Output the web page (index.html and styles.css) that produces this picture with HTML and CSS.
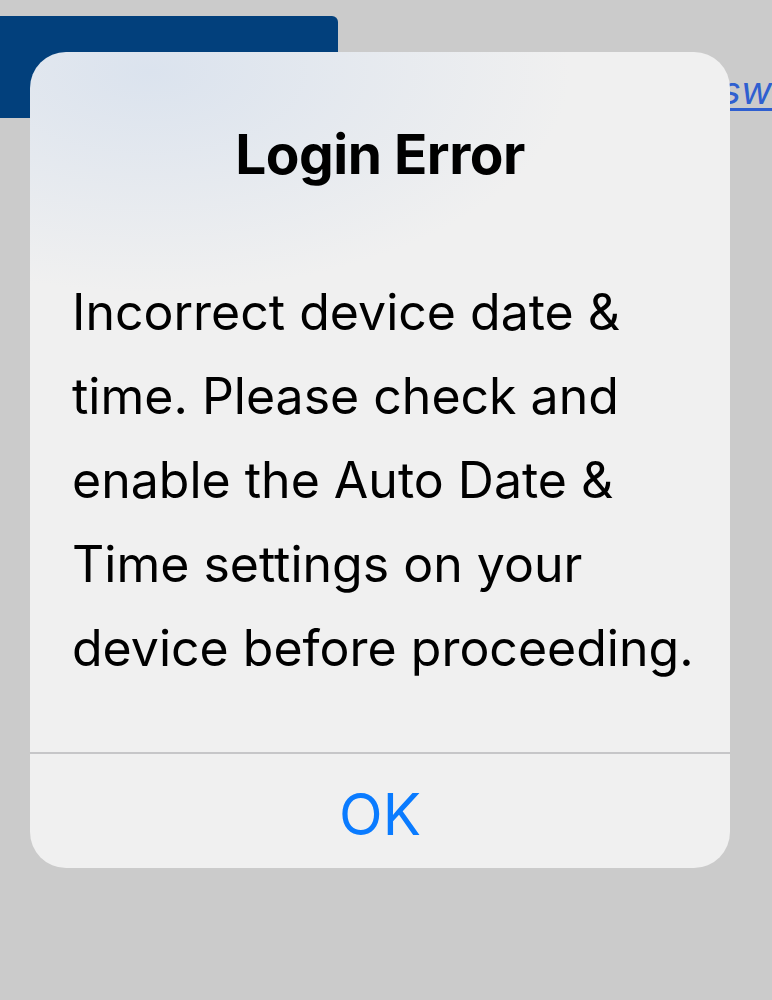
FILE: index.html
```html
<!DOCTYPE html>
<html lang="en">
<head>
  <meta charset="UTF-8">
  <title>Login</title>
  <meta name="viewport" content="width=device-width, initial-scale=1.0">
  <link rel="stylesheet" href="styles.css">
</head>
<body>
  <div class="page">
    <div class="toolbar">
      <button class="login-btn"></button>
      <a class="forgot-link" href="#">sw</a>
    </div>
  </div>

  <div class="backdrop">
    <div class="alert">
      <div class="alert-body">
        <h2 class="alert-title">Login Error</h2>
        <p class="alert-message">Incorrect device date &amp;<br>time. Please check and<br>enable the Auto Date &amp;<br>Time settings on your<br>device before proceeding.</p>
      </div>
      <button class="alert-action">OK</button>
    </div>
  </div>
</body>
</html>
```

FILE: styles.css
```css
:root {
  --page-bg: #cbcbcb;
  --alert-bg: #f0f0f0;
  --alert-line: #c6c6c8;
  --ios-blue: #0a7bff;
  --brand-blue: #02407c;
}

* {
  box-sizing: border-box;
}

body {
  margin: 0;
  min-height: 100vh;
  background-color: var(--page-bg);
  font-family: 'Inter', 'Roboto', sans-serif;
  overflow: hidden;
}

.page {
  padding-top: 16px;
}

.toolbar {
  display: flex;
  align-items: flex-start;
  justify-content: space-between;
}

.login-btn {
  width: 338px;
  height: 102px;
  border: 0;
  border-radius: 0 6px 6px 0;
  background-color: var(--brand-blue);
}

.forgot-link {
  margin-top: 54px;
  color: #2f5fd0;
  font-size: 38px;
  font-style: italic;
  line-height: 40px;
  text-decoration-thickness: 3px;
  text-underline-offset: 4px;
  white-space: nowrap;
}

.backdrop {
  position: absolute;
  inset: 0;
}

.alert {
  position: absolute;
  left: 30px;
  top: 52px;
  width: 700px;
  border-radius: 36px;
  overflow: hidden;
  background: radial-gradient(ellipse 420px 220px at 120px 20px, #dbe3ee 0%, rgba(240, 240, 240, 0) 100%), var(--alert-bg);
}

.alert-body {
  padding: 72px 10px 62px 42px;
  border-bottom: 2px solid var(--alert-line);
}

.alert-title {
  margin: 0 0 86px;
  text-align: center;
  font-size: 55px;
  font-weight: 700;
  line-height: 60px;
  color: #000;
  letter-spacing: -0.5px;
  padding-right: 32px;
}

.alert-message {
  margin: 0;
  font-size: 50px;
  line-height: 84px;
  color: #000;
  font-weight: 400;
  letter-spacing: 0;
  white-space: nowrap;
}

.alert-action {
  display: block;
  width: 100%;
  height: 114px;
  border: 0;
  background: transparent;
  color: var(--ios-blue);
  font-family: inherit;
  font-size: 57px;
  font-weight: 400;
  padding: 6px 0 0;
}
```
